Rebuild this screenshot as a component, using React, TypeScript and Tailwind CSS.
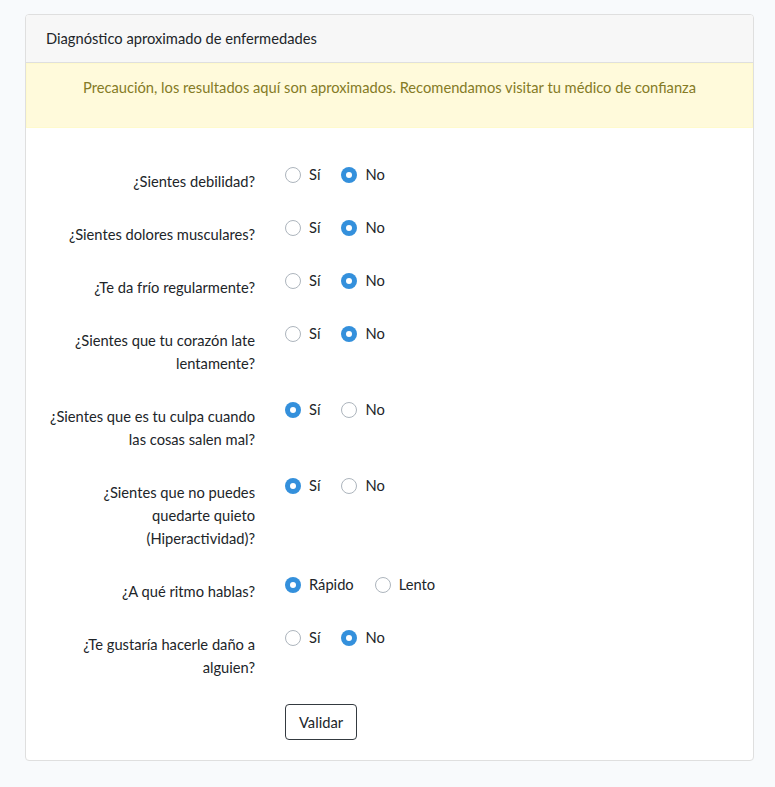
import { useState } from 'react';

type Pregunta = {
  id: string;
  lineas: string[];
  opciones: [string, string];
  valor: string;
};

const PREGUNTAS: Pregunta[] = [
  { id: 'debilidad', lineas: ['¿Sientes debilidad?'], opciones: ['Sí', 'No'], valor: 'No' },
  { id: 'dolores', lineas: ['¿Sientes dolores musculares?'], opciones: ['Sí', 'No'], valor: 'No' },
  { id: 'frio', lineas: ['¿Te da frío regularmente?'], opciones: ['Sí', 'No'], valor: 'No' },
  {
    id: 'corazon',
    lineas: ['¿Sientes que tu corazón late', 'lentamente?'],
    opciones: ['Sí', 'No'],
    valor: 'No',
  },
  {
    id: 'culpa',
    lineas: ['¿Sientes que es tu culpa cuando', 'las cosas salen mal?'],
    opciones: ['Sí', 'No'],
    valor: 'Sí',
  },
  {
    id: 'quieto',
    lineas: ['¿Sientes que no puedes', 'quedarte quieto', '(Hiperactividad)?'],
    opciones: ['Sí', 'No'],
    valor: 'Sí',
  },
  { id: 'ritmo', lineas: ['¿A qué ritmo hablas?'], opciones: ['Rápido', 'Lento'], valor: 'Rápido' },
  {
    id: 'dano',
    lineas: ['¿Te gustaría hacerle daño a', 'alguien?'],
    opciones: ['Sí', 'No'],
    valor: 'No',
  },
];

function Radio({ marcado, etiqueta, onClick }: { marcado: boolean; etiqueta: string; onClick: () => void }) {
  return (
    <button type="button" onClick={onClick} className="mr-[21px] flex h-[23px] items-center gap-2">
      {marcado ? (
        <span className="flex h-4 w-4 items-center justify-center rounded-full bg-[#3490dc]">
          <span className="h-[6px] w-[6px] rounded-full bg-white" />
        </span>
      ) : (
        <span className="h-4 w-4 rounded-full border border-[#adb5bd] bg-white" />
      )}
      <span>{etiqueta}</span>
    </button>
  );
}

export default function App() {
  const [respuestas, setRespuestas] = useState<Record<string, string>>(
    Object.fromEntries(PREGUNTAS.map((p) => [p.id, p.valor])),
  );

  return (
    <div
      className="min-h-[787px] bg-[#f8fafc] pl-[25px] pr-[21px] pt-[14px] text-[14.7px] leading-[23px] text-[#212529]"
      style={{ fontFamily: 'Lato, "Noto Sans", sans-serif' }}
    >
      <div className="overflow-hidden rounded border border-[#dfdfdf] bg-white">
        <div className="border-b border-[#dfdfdf] bg-[#f7f7f7] px-5 py-3">Diagnóstico aproximado de enfermedades</div>

        <div className="border border-[#fffacc] bg-[#fffadb] px-5 pb-[28px] pt-3 text-center text-[#857b26]">
          Precaución, los resultados aquí son aproximados. Recomendamos visitar tu médico de confianza
        </div>

        <form className="px-5 pb-5 pt-[35px]">
          {PREGUNTAS.map((p) => (
            <div key={p.id} className="mb-4 flex gap-[30px]">
              <label className="w-[209px] shrink-0 py-[7px] text-right">
                {p.lineas.map((l) => (
                  <span key={l} className="block">
                    {l}
                  </span>
                ))}
              </label>
              <div className="flex items-start">
                {p.opciones.map((o) => (
                  <Radio
                    key={o}
                    etiqueta={o}
                    marcado={respuestas[p.id] === o}
                    onClick={() => setRespuestas({ ...respuestas, [p.id]: o })}
                  />
                ))}
              </div>
            </div>
          ))}
          <div className="flex">
            <button
              type="button"
              className="ml-[239px] mt-[2px] h-[36px] rounded border border-[#343a40] px-[13px] text-[#212529]"
            >
              Validar
            </button>
          </div>
        </form>
      </div>
    </div>
  );
}
